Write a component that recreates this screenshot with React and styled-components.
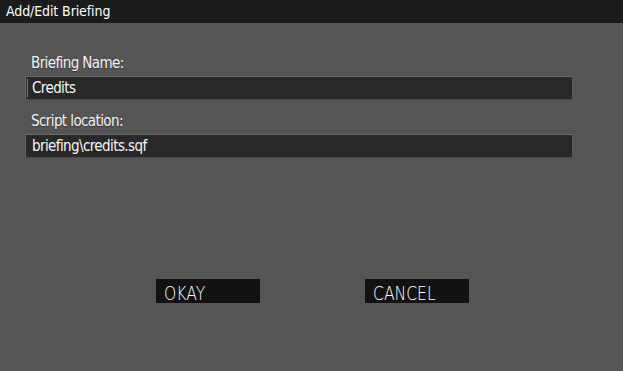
import styled, { createGlobalStyle } from "styled-components";

const GlobalStyle = createGlobalStyle`
  html, body {
    margin: 0;
    padding: 0;
    background: #555555;
  }
  * {
    box-sizing: border-box;
  }
`;

const Dialog = styled.div`
  width: 623px;
  height: 371px;
  background: #555555;
  display: flex;
  flex-direction: column;
  font-family: "DejaVu Sans Condensed", "Roboto", sans-serif;
`;

const TitleBar = styled.div`
  height: 23px;
  background: #1b1b1b;
  color: #ffffff;
  font-size: 14px;
  line-height: 23px;
  padding-left: 6px;
  letter-spacing: -0.1px;
`;

const Body = styled.div`
  flex: 1;
  display: flex;
  flex-direction: column;
  padding: 28px 50px 0 25px;
`;

const Label = styled.div`
  color: #f2f2f2;
  font-size: 15px;
  height: 25px;
  line-height: 24px;
  padding-left: 6px;
  letter-spacing: -0.6px;
  text-shadow: 0 1px 1px rgba(0, 0, 0, 0.35);
`;

const Field = styled.div`
  height: 24px;
  background: #282828;
  border-top: 1px solid #6a6a6a;
  border-left: 1px solid #666666;
  border-right: 1px solid #5a5a5a;
  border-bottom: 1px solid #4a4a4a;
  color: #f5f5f5;
  font-size: 15px;
  line-height: 22px;
  padding-left: 6px;
  margin-bottom: 9px;
  letter-spacing: -0.6px;
  position: relative;

  &::before {
    content: "";
    position: absolute;
    left: 1px;
    top: 2px;
    bottom: 2px;
    width: 1px;
    background: ${({ $focused }) => ($focused ? "#777" : "transparent")};
  }
`;

const Buttons = styled.div`
  display: flex;
  gap: 105px;
  margin-top: 112px;
  padding-left: 131px;
`;

const Button = styled.div`
  width: 104px;
  height: 24px;
  background: #121212;
  color: #ffffff;
  font-family: "DejaVu Sans", "Roboto", sans-serif;
  font-weight: 200;
  font-size: 19px;
  line-height: 22px;
  padding: 3px 0 0 8px;
  overflow: hidden;
  white-space: nowrap;
`;

const ButtonText = styled.span`
  display: inline-block;
  transform: scaleX(0.82);
  transform-origin: left center;
`;

export default function App() {
  return (
    <>
      <GlobalStyle />
      <Dialog>
        <TitleBar>Add/Edit Briefing</TitleBar>
        <Body>
          <Label>Briefing Name:</Label>
          <Field $focused>Credits</Field>
          <Label>Script location:</Label>
          <Field>briefing\credits.sqf</Field>
          <Buttons>
            <Button>
              <ButtonText>OKAY</ButtonText>
            </Button>
            <Button>
              <ButtonText>CANCEL</ButtonText>
            </Button>
          </Buttons>
        </Body>
      </Dialog>
    </>
  );
}
